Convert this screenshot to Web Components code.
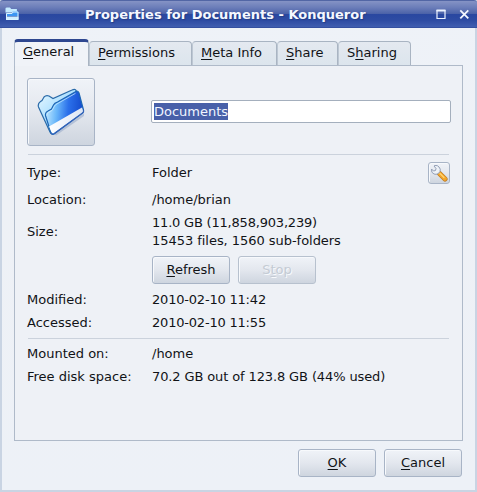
<!DOCTYPE html>
<html lang="en">
<head>
<meta charset="utf-8">
<title>Properties for Documents - Konqueror</title>
<style>
  body {
    margin: 0;
    font: 13px/18px "DejaVu Sans", sans-serif;
    color: #111317;
    overflow: hidden;
  }
  u {
    text-decoration-skip-ink: none;
    text-decoration-thickness: 1px;
    text-underline-offset: 2px;
  }
  .digits { letter-spacing: -.2px; }
  .mixed { letter-spacing: -.12px; }
  .files { letter-spacing: -.04px; }
</style>
</head>
<body>
<kde-window>
  <span slot="title">Properties for Documents - Konqueror</span>
  <kde-tabs>
    <kde-tab active style="--width: 75px"><u>G</u>eneral</kde-tab>
    <kde-tab style="--width: 103px"><u>P</u>ermissions</kde-tab>
    <kde-tab style="--width: 85px"><u>M</u>eta Info</kde-tab>
    <kde-tab style="--width: 61px"><u>S</u>hare</kde-tab>
    <kde-tab style="--width: 73px">S<u>h</u>aring</kde-tab>
  </kde-tabs>
  <kde-panel>
    <file-header>Documents</file-header>
    <kde-line></kde-line>
    <prop-row style="--row: 35px"><span slot="label">Type:</span>Folder<kde-button slot="end" style="--width: 22px; --height: 22px"><wrench-icon></wrench-icon></kde-button></prop-row>
    <prop-row style="--row: 19px"><span slot="label">Location:</span>/home/brian</prop-row>
    <prop-row style="--row: 45px"><span slot="label">Size:</span><span class="digits">11.0 GB (11,858,903,239)</span><br><span class="files">15453 files, 1560 sub-folders</span></prop-row>
    <prop-row style="--row: 32px"><button-row><kde-button><u>R</u>efresh</kde-button><kde-button disabled>S<u>t</u>op</kde-button></button-row></prop-row>
    <prop-row style="--row: 27px"><span slot="label">Modified:</span><span class="digits">2010-02-10 11:42</span></prop-row>
    <prop-row style="--row: 19px"><span slot="label">Accessed:</span><span class="digits">2010-02-10 11:55</span></prop-row>
    <kde-line style="--gap: 6px"></kde-line>
    <prop-row style="--row: 29px"><span slot="label">Mounted on:</span>/home</prop-row>
    <prop-row style="--row: 17px"><span slot="label">Free disk space:</span><span class="mixed">70.2 GB out of 123.8 GB (44% used)</span></prop-row>
  </kde-panel>
  <button-row slot="actions"><kde-button><u>O</u>K</kde-button><kde-button><u>C</u>ancel</kde-button></button-row>
</kde-window>

<script>
function define(name, html) {
  const template = document.createElement('template');
  template.innerHTML = html;
  customElements.define(name, class extends HTMLElement {
    constructor() {
      super();
      this.attachShadow({ mode: 'open' }).appendChild(template.content.cloneNode(true));
    }
  });
}

define('kde-window', `
<style>
  :host {
    display: flex;
    flex-direction: column;
    box-sizing: border-box;
    width: 477px;
    height: 492px;
    background: linear-gradient(#eef2f8, #eef1f6 40%, #edf1f7);
    border: solid #c9d4e3;
    border-width: 0 2px 2px;
  }
  header {
    display: flex;
    align-items: center;
    box-sizing: border-box;
    height: 28px;
    margin: 0 -2px;
    padding: 0 7px 0 5px;
    border-top: 1px solid #5266a5;
    border-bottom: 1px solid #3450a0;
    border-radius: 3px 3px 0 0;
    background: linear-gradient(#8593c5, #6b7db9 25%, #4b62a8 49%, #2947a0 52%, #2e4ca3 75%, #405eb0);
    color: #f5f8ff;
    font-weight: bold;
    text-shadow: 1px 1px 1px #263f86;
  }
  .title { flex: 1; padding: 1px 0 0 66px; white-space: nowrap; }
  .controls { display: flex; gap: 13px; padding-top: 1px; }
  svg { display: block; }
  main { padding: 11px 12px 0; }
  footer { display: flex; justify-content: flex-end; padding: 8px 13px 0; }
</style>
<header>
  <svg width="14" height="14" viewBox="0 0 14 14">
    <path d="M1 1h4l1 1h6v3H2z" fill="#9bd3ff"/>
    <path d="M.5 1.5Q.5.5 2 .5h3l1 1.5h5.500v2H8L7 5.500H.5z" fill="#c5ebff"/>
    <path d="M1 6h6l1-1.500h5.500V9H1z" fill="#3d96f2"/>
    <path d="M1 9.500h12.500v3.500H1z" fill="#cfeeff"/>
    <path d="M1.500 12.500V6.500h5.500l1-1.500h5v7.500z" fill="none" stroke="#d8f2ff"/>
  </svg>
  <div class="title"><slot name="title"></slot></div>
  <div class="controls">
    <svg width="10" height="11" viewBox="0 0 10 11"><path d="M1 1.5h8v8H1z" fill="none" stroke="#edf3ff" stroke-width="1.2"/><path d="M.5 1.5h9" stroke="#edf3ff" stroke-width="2"/></svg>
    <svg width="11" height="11" viewBox="0 0 11 11"><path d="M1.3 1.3l8 8m0-8l-8 8" stroke="#f3f7ff" stroke-width="1.8"/></svg>
  </div>
</header>
<main><slot></slot></main>
<footer><slot name="actions"></slot></footer>
`);

define('kde-tabs', `
<style>
  :host { display: flex; align-items: flex-end; height: 26px; }
</style>
<slot></slot>
`);

define('kde-tab', `
<style>
  :host {
    box-sizing: border-box;
    width: var(--width);
    height: 24px;
    padding: 2px 0 0 8px;
    border: 1px solid #a9b4c2;
    border-bottom: 0;
    border-left-color: #bdc7d3;
    border-radius: 4px 4px 0 0;
    background: linear-gradient(#e4e9f0, #dce5ed);
    white-space: nowrap;
  }
  :host([active]) {
    position: relative;
    height: 27px;
    margin-bottom: -1px;
    padding: 1px 0 0 8px;
    border-top: 3px solid #2e4790;
    border-left-color: #b0bccd;
    background: #f0f3f8;
  }
</style>
<slot></slot>
`);

define('kde-panel', `
<style>
  :host {
    display: block;
    box-sizing: border-box;
    width: 449px;
    height: 376px;
    padding: 0 12px;
    border: 1px solid #afbac9;
    background: #eef1f6;
  }
</style>
<slot></slot>
`);

define('kde-line', `
<style>
  :host {
    display: block;
    height: 1px;
    margin: var(--gap, 0) 1px 0;
    background: #cbd2dc;
  }
</style>
`);

define('prop-row', `
<style>
  :host {
    display: grid;
    grid-template-columns: 125px 1fr auto;
    align-items: center;
    height: var(--row);
    white-space: nowrap;
  }
</style>
<div><slot name="label"></slot></div>
<div><slot></slot></div>
<slot name="end"></slot>
`);

define('button-row', `
<style>
  :host { display: flex; gap: 8px; }
</style>
<slot></slot>
`);

define('kde-button', `
<style>
  :host {
    display: flex;
    align-items: center;
    justify-content: center;
    box-sizing: border-box;
    width: var(--width, 78px);
    height: var(--height, 28px);
    border: 1px solid #a8b4c6;
    border-radius: 3px;
    background: linear-gradient(#f0f3f8, #e3e7ee 50%, #ced5df);
    box-shadow: inset 1px 1px #f7f9fc;
  }
  :host([disabled]) {
    color: #c4cbd4;
    border-color: #b7c1ce;
    text-shadow: 1px 1px #f7f9fc;
  }
</style>
<div><slot></slot></div>
`);

define('file-header', `
<style>
  :host {
    display: grid;
    grid-template-columns: 124px 300px;
    align-items: center;
    height: 88px;
    box-sizing: border-box;
    padding-top: 4px;
  }
  .name {
    box-sizing: border-box;
    height: 23px;
    margin-top: -1px;
    padding: 2px;
    border: 1px solid #a4afbd;
    border-radius: 2px;
    background: #fff;
  }
  .name span {
    display: inline-block;
    height: 17px;
    line-height: 18px;
    background: #4860a9;
    color: #f0f5ff;
  }
</style>
<kde-button style="--width: 68px; --height: 68px"><folder-icon></folder-icon></kde-button>
<div class="name"><span><slot></slot></span></div>
`);

define('folder-icon', `
<style>
  :host, svg { display: block; }
</style>
<svg width="48" height="48" viewBox="0 0 48 48">
  <defs>
    <linearGradient id="back" x1="0" y1="0" x2="1" y2="1"><stop stop-color="#ecfaff"/><stop offset=".5" stop-color="#a4dcff"/><stop offset="1" stop-color="#4d9eed"/></linearGradient>
    <linearGradient id="front" x1="0" y1=".3" x2="1" y2=".4"><stop stop-color="#c5eaff"/><stop offset=".3" stop-color="#6bb8fa"/><stop offset=".6" stop-color="#2b70ea"/><stop offset="1" stop-color="#1248cb"/></linearGradient>
    <linearGradient id="band"><stop stop-color="#fff"/><stop offset="1" stop-color="#dce5f4"/></linearGradient>
  </defs>
  <path d="M17 46L47 25v3L19 47.500z" fill="#8ea1c6" opacity=".5"/>
  <path d="M1.500 19Q.5 15.500 3.500 13.500L5 12.500 7 9q2-2 5-1l4 2.500L35 2q4-2 4.500 2L43 24 17 45.500q-3 1-4-1.500z" fill="url(#back)" stroke="#2a6aa8" stroke-width="1.200"/>
  <path d="M8.500 27.500Q8 24.500 11 23l3.500-2 2-4q1-2 4-3L38 4q3-2 4 1l4.500 17q.5 2-1 3L17 46q-2 1-3-1z" fill="url(#front)" stroke="#1d66b4" stroke-width="1.200"/>
  <path d="M12 38.500L45 19.500l1 3q.3 1.500-1 2.500L17 45q-2 .8-2.600-1z" fill="url(#band)"/>
  <path d="M14 44.500q1 2.300 3 1.200L45.500 25q1.500-1 1-3" fill="none" stroke="#3563b8" stroke-width="1.200"/>
  <path d="M9.700 27.500q0-2 2-3.200l3.500-2 2.300-4.200q1-1.800 3.500-2.800L38.500 5.300" fill="none" stroke="#d4f2ff" opacity=".7"/>
</svg>
`);

define('wrench-icon', `
<style>
  :host, svg { display: block; }
</style>
<svg width="18" height="18" viewBox="0 0 18 18">
  <path d="M9 9l6 6" stroke="#bd7e28" stroke-width="5.200" stroke-linecap="round"/>
  <path d="M9.500 9.500l5.500 5.300" stroke="#f4a629" stroke-width="3.800" stroke-linecap="round"/>
  <path d="M10 9.500l4 4" stroke="#ffd575" stroke-width="1.200" stroke-linecap="round"/>
  <path d="M5 1.500l-1 .5 2 2.500-.5 2-2 .5L1.500 5Q1 9 4 10q2 .7 4-.2l2-2.300Q11 5 9 3 7.500 1 5 1.500z" fill="#eef2f8" stroke="#929fb6"/>
</svg>
`);
</script>
</body>
</html>
